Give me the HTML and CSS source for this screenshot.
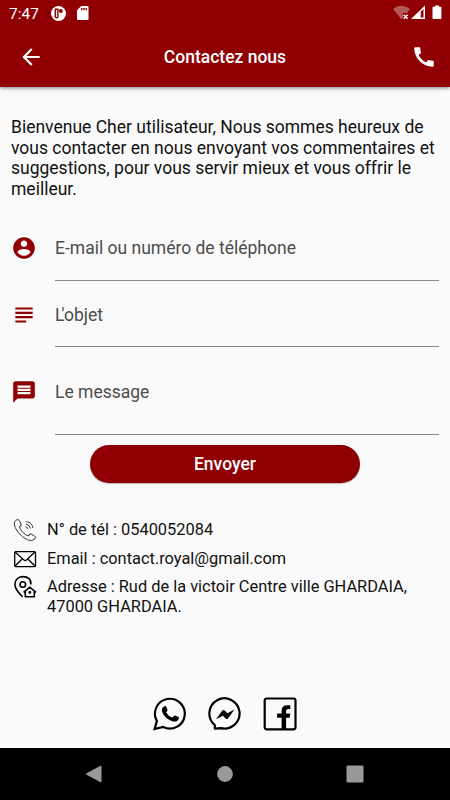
FILE: index.html
```html
<!DOCTYPE html>
<html lang="fr">
<head>
<meta charset="utf-8">
<title>Contactez nous</title>
<link rel="stylesheet" href="styles.css">
</head>
<body>
<div class="screen">
  <header class="header">
    <div class="status">
      <span class="clock">7:47</span>
      <svg class="status-app" width="15" height="15" viewBox="0 0 15 15"><circle cx="7.5" cy="7.5" r="7.5" fill="#fff"/><path d="M4.3 3.2h2.6v7.2a1.3 1.3 0 0 1-2.6 0z" fill="#fff" stroke="#900003" stroke-width="1.4"/><circle cx="9.8" cy="4.9" r="2" fill="#900003"/></svg>
      <svg class="status-card" width="12" height="14" viewBox="0 0 12 14"><path d="M4.3 0H10.5Q11.5 0 11.5 1V13Q11.5 14 10.5 14H1Q0 14 0 13V4.3z" fill="#fff"/><path d="M4.8 2v2.2M7 2v2.2M9.2 2v2.2" stroke="#900003" stroke-width="1.4"/></svg>
      <svg class="status-right" width="50" height="16" viewBox="0 0 50 16"><path d="M0 4Q8.3-2.4 17 4L14 8H10v5L8.5 14.5z" fill="#fff" opacity=".35"/><path d="m10.7 9.7 4 4m0-4-4 4" stroke="#fff" stroke-width="1.4"/><path d="M32 .5V14H18z" fill="#fff"/><path d="M27.8 6.5 30.5 4v8.4h-2.7z" fill="#900003"/><path d="M42 1.2V.4h4v1.3h1.5Q48.4 1.7 48.4 2.6V13Q48.4 14 47.5 14h-7Q39.5 14 39.5 13V2.6q0-.9.9-.9H42z" fill="#fff"/></svg>
    </div>
    <div class="appbar">
      <svg width="26" height="26" viewBox="0 0 24 24"><path fill="#fff" d="M20 11H7.83l5.59-5.59L12 4l-8 8 8 8 1.41-1.41L7.83 13H20z"/></svg>
      <h1 class="title">Contactez nous</h1>
      <svg width="26" height="26" viewBox="0 0 24 24"><path fill="#fff" d="M20.01 15.38c-1.23 0-2.42-.2-3.53-.56-.35-.12-.74-.03-1.01.24l-1.57 1.97c-2.83-1.35-5.48-3.9-6.89-6.83l1.95-1.66c.27-.28.35-.67.24-1.02-.37-1.11-.56-2.3-.56-3.53 0-.54-.45-.99-.99-.99H4.19C3.65 3 3 3.24 3 3.99 3 13.28 10.73 21 20.01 21c.71 0 .99-.63.99-1.18v-3.45c0-.54-.45-.99-.99-.99z"/></svg>
    </div>
  </header>
  <main class="main">
    <p class="intro">Bienvenue Cher utilisateur, Nous sommes heureux de<br>vous contacter en nous envoyant vos commentaires et<br>suggestions, pour vous servir mieux et vous offrir le<br>meilleur.</p>
    <form class="form">
      <div class="field">
        <svg width="26" height="26" viewBox="0 0 24 24"><path fill="#900003" d="M12 2C6.48 2 2 6.48 2 12s4.48 10 10 10 10-4.48 10-10S17.52 2 12 2zm0 3c1.66 0 3 1.34 3 3s-1.34 3-3 3-3-1.34-3-3 1.34-3 3-3zm0 14.2c-2.5 0-4.71-1.28-6-3.22.03-1.99 4-3.08 6-3.08 1.99 0 5.97 1.09 6 3.08-1.29 1.94-3.5 3.22-6 3.22z"/></svg>
        <label class="label">E-mail ou numéro de téléphone</label>
      </div>
      <div class="field">
        <svg width="26" height="26" viewBox="0 0 24 24"><path fill="#900003" d="M14 17H4v2h10v-2zm6-8H4v2h16V9zM4 15h16v-2H4v2zM4 5v2h16V5H4z"/></svg>
        <label class="label"><span class="kern">L</span>'objet</label>
      </div>
      <div class="field field-message">
        <svg width="26" height="26" viewBox="0 0 24 24"><path fill="#900003" d="M20 2H4c-1.1 0-1.99.9-1.99 2L2 22l4-4h14c1.1 0 2-.9 2-2V4c0-1.1-.9-2-2-2zm-2 12H6v-2h12v2zm0-3H6V9h12v2zm0-3H6V6h12v2z"/></svg>
        <label class="label">Le message</label>
      </div>
      <button class="send" type="button">Envoyer</button>
    </form>
    <div class="contacts">
      <div class="contact">
        <svg width="24" height="24" viewBox="0 0 24 24" fill="none" stroke="#222" stroke-width=".9" stroke-linejoin="round"><path d="M3 2.2Q5.2.5 6.4 2.7L8 6Q8.3 7.5 6.6 8.8Q6.3 11 9.8 14.4T15.3 17.8Q16.7 15.4 18.3 16.1L21.6 18Q23.3 19.2 22 20.7Q19.3 24 14.6 21.8Q8.8 19.2 4.9 14.2Q1.4 9.2 1.2 5.7Q1.3 3.5 3 2.2zM6.6 8.8 8.5 6.7M15.3 17.8l2-1.8"/><path d="M12.6 8.7q2 .3 2.2 2.2M12.9 6.1q3.9.4 4.5 4.4M13.2 3.6q6 .8 6.8 6.4"/></svg>
        <span>N° de tél : 0540052084</span>
      </div>
      <div class="contact">
        <svg width="24" height="24" viewBox="0 0 24 24" fill="none" stroke="#000" stroke-width="1.3"><rect x="1.7" y="4.6" width="20.8" height="15" rx="1"/><path d="m2 5 9 8q1.2 1 2.4 0L22 5M2 19l7.5-7.2M22 19l-7.4-7.2"/></svg>
        <span>Email : contact.royal@gmail.com</span>
      </div>
      <div class="contact contact-address">
        <svg width="24" height="24" viewBox="0 0 24 24" fill="none" stroke="#000" stroke-width="1.6"><path d="M17.8 9.5C18.4 4.5 15 1.6 9.9 1.6S1.8 5.2 1.9 9.6C2.2 14.4 6.4 18.7 9.6 21.8"/><circle cx="9.8" cy="9.5" r="2.8"/><path d="m10.6 17.3 6.2-5.1 6.2 5.1M12.3 16.3v5.4h9v-5.4M16.8 16v2.8M15.4 17.4h2.8"/></svg>
        <span>Adresse : Rud de la victoir Centre ville GHARDAIA,<br>47000 GHARDAIA.</span>
      </div>
    </div>
    <div class="social">
      <svg width="34" height="34" viewBox="0 0 34 34"><path d="M1.6 32.1 3.9 24A14.9 14.9 0 1 1 10.2 30z" fill="none" stroke="#000" stroke-width="2.2"/><path d="M10.9 9.4Q12.8 8.6 13.4 10L14.6 13Q14.6 14 13.2 15.4Q15.4 19.2 19.3 20.6L21.2 18.8Q22 18.2 22.8 18.7L25.5 20Q26.3 20.8 25.5 22.4Q23.6 25.2 20 24.4Q11.4 21.8 8.9 14.3Q8.4 11 10.9 9.4z"/></svg>
      <svg width="34" height="34" viewBox="0 0 34 34"><path d="M6.8 31.6V28A15.1 15.1 0 1 1 13 31.1z" fill="none" stroke="#000" stroke-width="2.2" stroke-linejoin="round"/><path d="M8 22.3 14.4 13.5Q15.5 12.5 16.7 13.5L19.5 16.2 26.4 12.6 20 21.5Q18.9 22.5 17.7 21.5L14.9 18.8z"/></svg>
      <svg width="34" height="34" viewBox="0 0 34 34"><rect x="1.7" y="1.5" width="30.8" height="30.8" rx="2" fill="none" stroke="#000" stroke-width="2.2"/><path d="M18.6 32V20.7h-4.5v-4.1h4.5v-2.8q0-5.6 5.7-5.6h3v3.9h-2.2q-2 0-2 2v2.5h4.2l-.7 4.1h-3.5V32z"/></svg>
    </div>
  </main>
  <nav class="nav">
    <svg width="18" height="18" viewBox="0 0 18 18"><path d="M1.2 9 16 1v16z" fill="#999" stroke="#999" stroke-linejoin="round"/></svg>
    <svg width="18" height="18" viewBox="0 0 18 18"><circle cx="9" cy="9" r="7.9" fill="#999"/></svg>
    <svg width="18" height="18" viewBox="0 0 18 18"><rect x=".5" y=".5" width="17" height="17" rx="1" fill="#999"/></svg>
  </nav>
</div>
</body>
</html>
```

FILE: styles.css
```css
* { box-sizing: border-box; }
body { margin: 0; font-family: Roboto, "Liberation Sans", sans-serif; color: #111; }
svg { display: block; flex: none; }
.screen { width: 450px; height: 800px; display: flex; flex-direction: column; background: #fafafa; overflow: hidden; }
.header { height: 87px; flex: none; background: #900003; color: #fff; box-shadow: 0 1px 4px rgba(0, 0, 0, .5); }
.status { height: 26px; display: flex; align-items: center; padding: 0 7px 0 9px; }
.clock { font-size: 15.5px; line-height: 26px; width: 42px; padding-top: 2px; }
.status-card { margin-left: 11px; }
.status-right { margin-left: auto; }
.appbar { height: 61px; display: flex; align-items: center; justify-content: space-between; padding: 0 13px 0 18px; }
.title { margin: 0 5px 0 0; font-size: 17.5px; font-weight: 500; line-height: 24px; }
.main { flex: 1; display: flex; flex-direction: column; }
.intro { margin: 30px 0 0 11px; font-size: 17.5px; line-height: 20.6px; white-space: nowrap; }
.form { margin: 18px 11px 0; display: flex; flex-direction: column; }
.field { height: 66.5px; display: flex; gap: 18px; padding-top: 18px; }
.field-message { height: 88px; padding-top: 29px; }
.label { flex: 1; font-size: 17.5px; line-height: 26px; color: #4c4c4c; border-bottom: 1px solid #8b8b8b; margin-bottom: 3px; }
.kern { letter-spacing: -3px; }
.send { align-self: center; width: 270px; height: 38px; margin-top: 7px; border: 0; border-radius: 19px; padding: 0; background: #900003; color: #fff; font: 500 17.5px/39px Roboto, "Liberation Sans", sans-serif; box-shadow: 0 1px 1px rgba(0, 0, 0, .25); }
.contacts { margin: 35px 0 0 13px; display: flex; flex-direction: column; gap: 4.5px; }
.contact { display: flex; gap: 10px; height: 24px; font-size: 16.4px; line-height: 24px; white-space: nowrap; }
.contact-address { height: 42px; line-height: 20px; }
.contact-address span { padding-top: 2px; }
.social { display: flex; justify-content: center; gap: 20.7px; margin-top: 80px; padding-left: 0; }
.nav { height: 52px; flex: none; background: #000; display: flex; align-items: center; justify-content: space-between; padding: 0 86px 0 85px; }
```
